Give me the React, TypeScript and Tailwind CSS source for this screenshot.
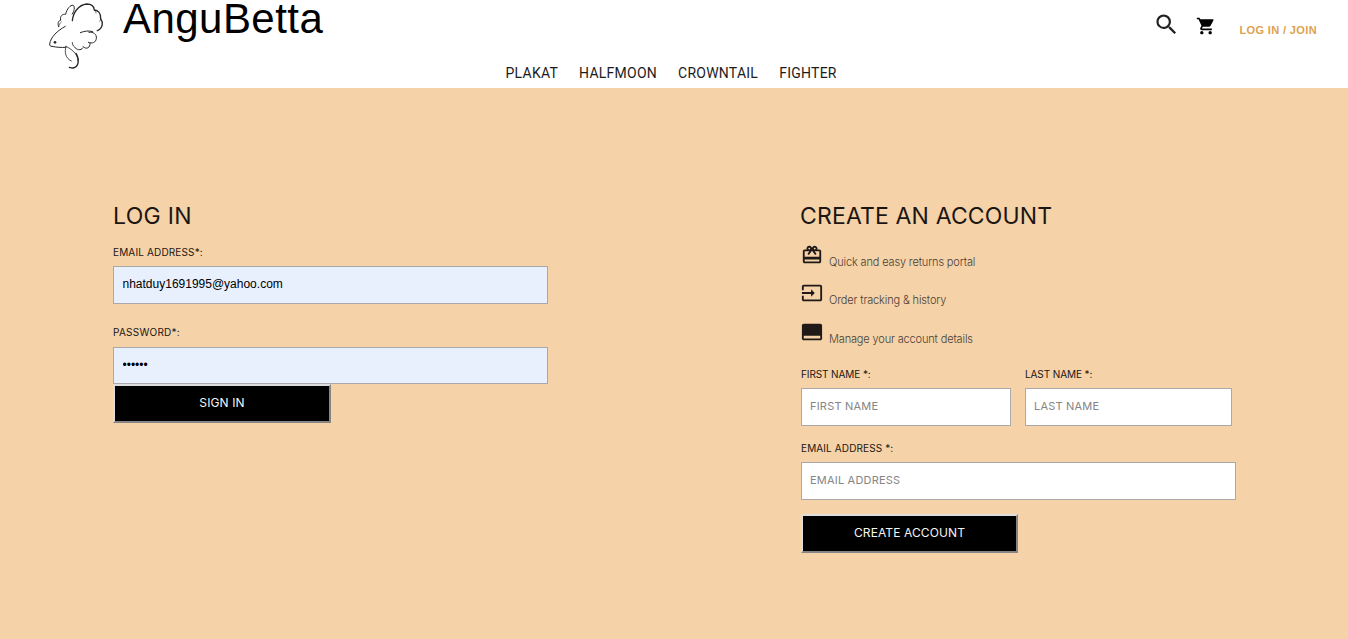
import { MdCallToAction, MdInput, MdRedeem, MdSearch, MdShoppingCart } from "react-icons/md";

function FishLogo() {
  return (
    <svg viewBox="0 0 240 240" className="h-20 w-20 shrink-0" fill="none" stroke="#2a2627" strokeLinecap="round" strokeLinejoin="round">
      <path strokeWidth="3" d="M76 79C52 92 32 111 29 132C29 138 31 139 36 139C49 142 64 143 78 142" />
      <path strokeWidth="3" d="M56 80C52 69 55 62 62 61C59 49 67 41 77 43C80 27 91 14 100 16C105 22 103 32 97 42" />
      <path strokeWidth="4" d="M97 62C99 38 115 15 140 12C153 12 162 19 163 30C174 31 183 40 182 56C190 67 189 85 172 92" />
      <path strokeWidth="2" d="M56 80C57 74 60 69 64 66M163 30C166 33 168 35 168 39M182 56C182 60 181 62 179 64" />
      <path strokeWidth="3" d="M121 98C133 93 147 91 158 95M147 97C160 94 171 104 169 115C168 127 157 132 145 127M150 130C151 143 140 150 129 140M128 144C123 153 109 150 103 140C98 137 97 131 97 128" />
      <path strokeWidth="2.5" d="M78 139C73 155 76 176 94 183M78 139C94 147 113 161 115 181" />
      <path strokeWidth="4" d="M108 160C119 179 117 201 99 204C95 204 91 203 88 202" />
      <circle cx="45" cy="127" r="4" fill="#2a2627" stroke="none" />
    </svg>
  );
}

const field = "block rounded-none border border-[#a9a9a9] px-2 outline-none";
const empty = field + " bg-white pb-[3px] font-[Inter,sans-serif] text-[11px] tracking-[0.2px] placeholder:text-[#858585]";
const filled = field + " bg-[#e8f0fe] pl-[8.5px] font-['Liberation_Sans',Arial,sans-serif] text-[12px] text-black";
const label = "block whitespace-nowrap text-[10px] leading-[14px] text-[#1b1613]";
const heading = "text-[23px] font-[430] leading-6 text-[#1b1613]";
const button =
  "block h-[39px] border-2 border-t-[#dddddd] border-l-[#dddddd] border-r-[#858585] border-b-[#858585] bg-black pb-px text-[12px] tracking-[0.1px] text-[#f4f4f4]";
const perk = "mt-[10px] ml-[6.5px] leading-4";
const perkIcon = "-ml-[0.5px] size-[22px] text-[#1f1a17]";

export default function App() {
  return (
    <div className="flex h-[639px] w-[1348px] flex-col overflow-hidden bg-[#f5d2a8] font-[Inter,sans-serif]">
      <header className="h-[88px] bg-white">
        <div className="flex h-[62px]">
          <div className="flex pl-10">
            <FishLogo />
            <h1 className="ml-[3px] font-['Liberation_Sans',Arial,sans-serif] text-[42px] leading-[38px] tracking-[0.45px] text-black">AnguBetta</h1>
          </div>
          <div className="ml-auto flex items-start pr-[31px]">
            <MdSearch className="mt-[10.5px] size-[27px] text-[#222]" />
            <MdShoppingCart className="mt-4 ml-4 size-5 text-black" />
            <a className="mt-[23px] ml-[23px] whitespace-nowrap font-['Liberation_Sans',Arial,sans-serif] text-[11px] font-bold leading-[14px] tracking-[0.37px] text-[#dda24f]">
              LOG IN / JOIN
            </a>
          </div>
        </div>
        <nav className="flex gap-[21px] pt-[2px] pl-[505.5px] font-[Roboto,sans-serif] text-[14px] leading-[18px] tracking-[0.25px] text-[#1c1c1c]">
          <a>PLAKAT</a>
          <a>HALFMOON</a>
          <a>CROWNTAIL</a>
          <a>FIGHTER</a>
        </nav>
      </header>
      <main className="flex flex-1 pt-[116px] pl-[113px]">
        <section className="w-[688px]">
          <h2 className={heading + " tracking-[0.3px]"}>LOG IN</h2>
          <label className={label + " mt-[17px] tracking-[0.15px]"}>EMAIL ADDRESS*:</label>
          <input className={filled + " mt-[7px] h-[38px] w-[435px] pb-[3px]"} defaultValue="nhatduy1691995@yahoo.com" />
          <label className={label + " mt-[21px] tracking-[0.25px]"}>PASSWORD*:</label>
          <input type="password" className={filled + " mt-[8px] h-[37px] w-[435px] pb-px"} defaultValue="secret" />
          <button className={button + " w-[218px]"}>SIGN IN</button>
        </section>
        <section>
          <h2 className={heading + " -ml-px tracking-[0.15px]"}>CREATE AN ACCOUNT</h2>
          <ul className="mt-4 text-[11px] font-light tracking-[-0.15px] text-[#4a3f35]">
            <li className="flex h-[38px]">
              <MdRedeem className={perkIcon} />
              <span className={perk}>Quick and easy returns portal</span>
            </li>
            <li className="flex h-[39px]">
              <MdInput className={perkIcon} />
              <span className={perk}>Order tracking & history</span>
            </li>
            <li className="flex h-[46px]">
              <MdCallToAction className={perkIcon} />
              <span className={perk}>Manage your account details</span>
            </li>
          </ul>
          <div className="flex gap-[14px]">
            <div>
              <label className={label + " tracking-[-0.1px]"}>FIRST NAME *:</label>
              <input className={empty + " mt-[7px] h-[38px] w-[210px]"} placeholder="FIRST NAME" />
            </div>
            <div>
              <label className={label + " tracking-[-0.1px]"}>LAST NAME *:</label>
              <input className={empty + " mt-[7px] h-[38px] w-[207px]"} placeholder="LAST NAME" />
            </div>
          </div>
          <label className={label + " mt-[15px] tracking-[0.12px]"}>EMAIL ADDRESS *:</label>
          <input className={empty + " mt-[7px] h-[38px] w-[435px]"} placeholder="EMAIL ADDRESS" />
          <button className={button + " mt-[14px] w-[217px]"}>CREATE ACCOUNT</button>
        </section>
      </main>
    </div>
  );
}
